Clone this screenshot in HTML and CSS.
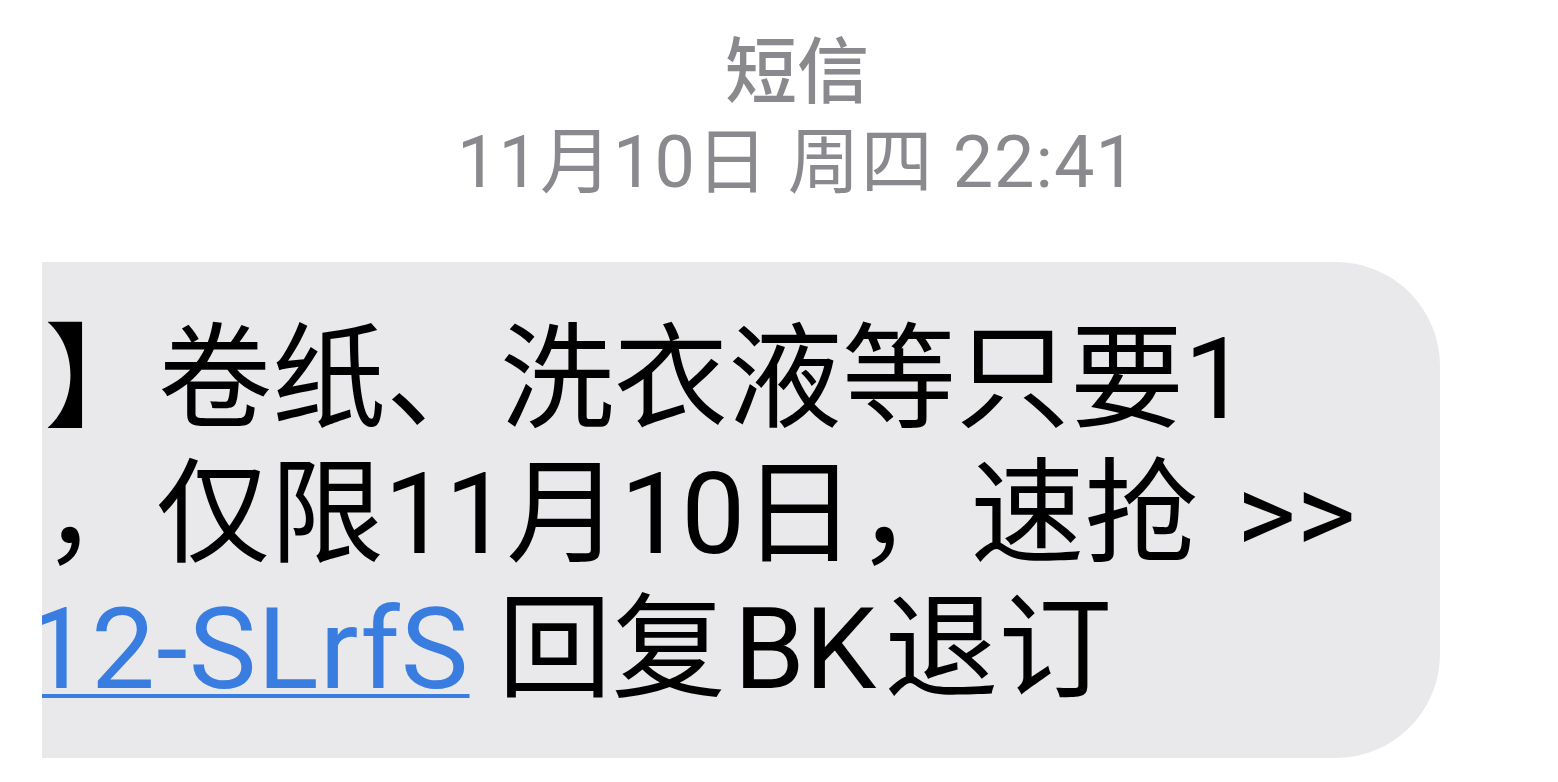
FILE: index.html
```html
<!DOCTYPE html>
<html lang="zh-CN">
<head>
<meta charset="utf-8">
<title>短信</title>
<link rel="stylesheet" href="styles.css">
</head>
<body>
  <div class="page">
    <header class="meta">
      <div class="service">短信</div>
      <div class="date">11月10日 周四 22:41</div>
    </header>
    <div class="thread">
      <div class="bubble">
        <div class="line line-1">】卷纸、洗衣液等只要1</div>
        <div class="line line-2">，仅限<span class="num">11</span>月<span class="num">10</span>日，速抢 <span class="arrows">&gt;&gt;</span></div>
        <div class="line line-3"><a class="link" href="#">12-SLrfS</a> 回复<span class="latin">BK</span>退订</div>
      </div>
    </div>
  </div>
</body>
</html>
```

FILE: styles.css
```css
html, body {
  margin: 0;
  padding: 0;
  background: #ffffff;
}

.page {
  width: 1558px;
  height: 782px;
  overflow: hidden;
  font-family: Roboto, "Noto Sans CJK SC", sans-serif;
}

.meta {
  display: flex;
  flex-direction: column;
  align-items: center;
  padding-top: 28px;
  padding-left: 36px;
  color: #8a8a8e;
  font-size: 72px;
  line-height: 90px;
}

.service {
  font-weight: 500;
}

.date {
  font-weight: 400;
  letter-spacing: 1px;
}

.thread {
  display: flex;
  padding-left: 42px;
  margin-top: 54px;
}

.bubble {
  width: 1398px;
  height: 496px;
  box-sizing: border-box;
  background: #e9e9eb;
  border-radius: 0 104px 104px 0;
  overflow: hidden;
  padding-top: 50px;
  color: #000000;
  font-size: 114px;
  line-height: 135px;
  white-space: nowrap;
}

.line-1 {
  margin-left: 2px;
}

.line-2 {
  margin-left: 0;
}

.line-3 {
  margin-left: -16px;
}

.num {
  letter-spacing: -3px;
}

.arrows {
  margin-left: 10px;
}

.link {
  color: #3a7de0;
  letter-spacing: 1px;
  text-decoration: underline;
  text-decoration-thickness: 4px;
  text-underline-offset: 6px;
}

.latin {
  margin: 0 8px;
}
```
